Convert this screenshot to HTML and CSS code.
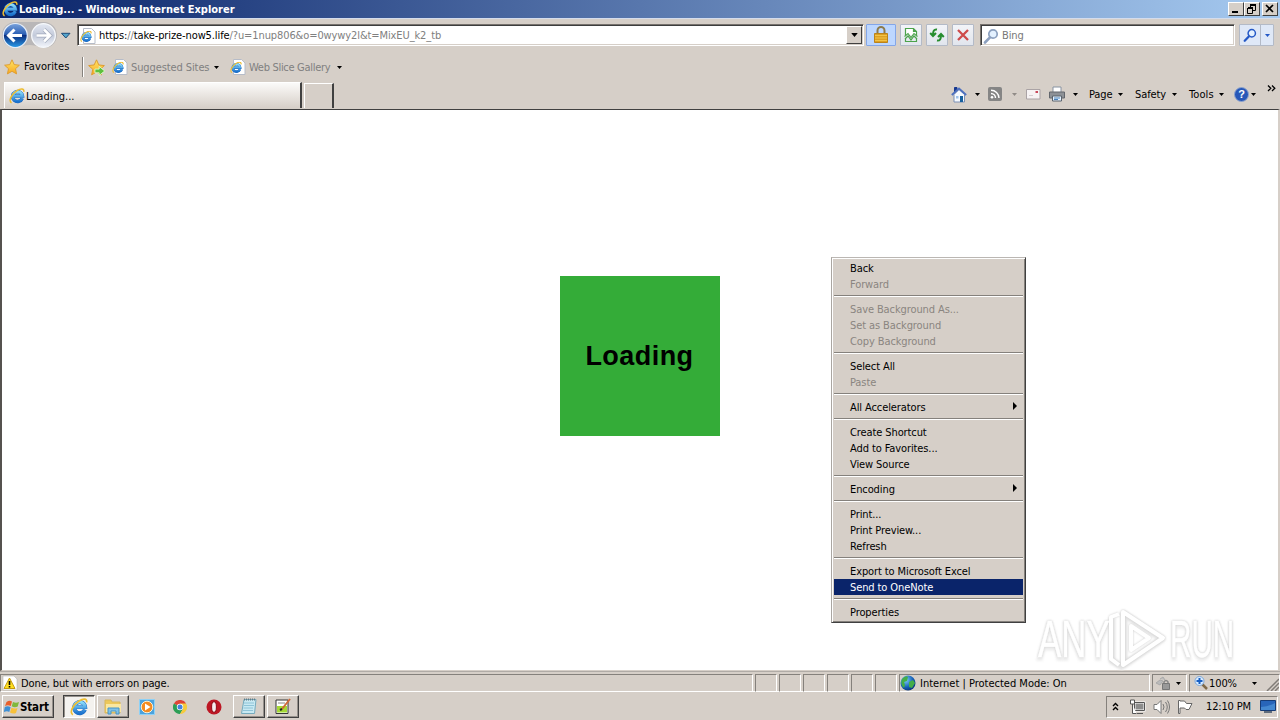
FILE: index.html
```
<!DOCTYPE html>
<html lang="en">
<head>
<meta charset="utf-8">
<title>Loading... - Windows Internet Explorer</title>
<link rel="stylesheet" href="styles.css">
</head>
<body>
<svg class="defs" width="0" height="0">
<defs>
<linearGradient id="blue" x1="0" y1="0" x2="0" y2="1"><stop offset="0" stop-color="#8bdcfa"/><stop offset="1" stop-color="#1c74cf"/></linearGradient>
<linearGradient id="nav" x1="0" y1="0" x2="0" y2="1"><stop offset="0" stop-color="#7ba3dc"/><stop offset=".45" stop-color="#2b5fb4"/><stop offset=".5" stop-color="#0c2f80"/><stop offset="1" stop-color="#2a9be8"/></linearGradient>
<linearGradient id="navoff" x1="0" y1="0" x2="0" y2="1"><stop offset="0" stop-color="#e3e8f2"/><stop offset=".5" stop-color="#c3cada"/><stop offset="1" stop-color="#f2f5fb"/></linearGradient>
<linearGradient id="gold" x1="0" y1="0" x2="0" y2="1"><stop offset="0" stop-color="#ffe668"/><stop offset="1" stop-color="#f8a820"/></linearGradient>
<radialGradient id="earth" cx=".35" cy=".3" r=".8"><stop offset="0" stop-color="#7fd0f8"/><stop offset=".6" stop-color="#1660b8"/><stop offset="1" stop-color="#0a2c6c"/></radialGradient>
</defs>
<symbol id="ie" viewBox="0 0 16 16">
<path d="M13.200 10.300A4.900 4.900 0 1 1 13.500 8.100H5" fill="none" stroke="#1a66bd" stroke-width="3.500"/>
<path d="M13.200 10.300A4.900 4.900 0 1 1 13.500 8.100H5" fill="none" stroke="url(#blue)" stroke-width="2.700"/>
<path d="M2.600 14.800C-1 13.200 2.500 6 8 2.600c3.600-2.200 7.400-2.400 6.800 1.200" fill="none" stroke="#edbd32" stroke-width="1.500"/>
</symbol>
<symbol id="iepage" viewBox="0 0 16 16">
<path d="M3.500.5h8l3.500 3.500v11.500h-11.500z" fill="#fff" stroke="#b6bcc8"/>
<svg x="0" y="2.500" width="12" height="12"><use href="#ie"/></svg>
</symbol>
<symbol id="star" viewBox="0 0 16 16"><path d="M8 .8l2.200 4.800 5.200.6-3.900 3.500 1.100 5.200L8 12.300l-4.600 2.600 1.100-5.200L.6 6.200l5.200-.6z" fill="url(#gold)" stroke="#dc9a2c" stroke-width=".9"/></symbol>
<symbol id="down" viewBox="0 0 5 3"><path d="M0 0h5L2.500 3z" fill="currentColor"/></symbol>
<symbol id="magnifier" viewBox="0 0 16 16"><path d="M7.200 9.200L2 14.500" stroke="currentColor" stroke-width="2.600" stroke-linecap="round"/><circle cx="10" cy="6" r="4.200" fill="#e4f1ff" stroke="currentColor" stroke-width="1.700"/></symbol>
</svg>

<header class="titlebar">
<svg class="i16" viewBox="0 0 16 16"><use href="#ie"/></svg>
<span class="title">Loading... - Windows Internet Explorer</span>
<div class="winbtns">
<span class="winbtn"><svg width="14" height="12"><path d="M3 9h6" stroke="#000" stroke-width="2"/></svg></span>
<span class="winbtn"><svg width="14" height="12" fill="none" stroke="#000"><path d="M5 1.500h6M5.500 2v2M10.500 1v6.500H8M3 4.500h5M2.500 5v5.500h5V4M5 2.500h6M2 5.500h6"/></svg></span>
<span class="winbtn close"><svg width="14" height="12"><path d="M3 2l7 7M10 2L3 9" stroke="#000" stroke-width="1.700"/></svg></span>
</div>
</header>

<nav class="navrow">
<svg class="travel" width="74" height="30" viewBox="0 0 74 30">
<path d="M15 2h29a13 13 0 0 1 0 26q-9-3-14.500-3T15 28A13 13 0 0 1 15 2z" fill="#b9b7b8"/>
<circle cx="15.300" cy="15.500" r="12" fill="url(#nav)" stroke="#e6edf7" stroke-width="1.200"/>
<path d="M14.500 9.500l-6 6 6 6M9 15.500h13" fill="none" stroke="#fff" stroke-width="3"/>
<circle cx="43.500" cy="15.500" r="11.800" fill="url(#navoff)" stroke="#f7f9fc" stroke-width="1.300"/>
<path d="M44 9.500l6 6-6 6M49.500 15.500h-13" fill="none" stroke="#a2aabc" stroke-width="4"/>
<path d="M44 9.500l6 6-6 6M49.500 15.500h-13" fill="none" stroke="#fff" stroke-width="2.600"/>
<path d="M61.500 13.300h8.500l-4.200 4.700z" fill="#54a5cc" stroke="#1f4c78"/>
</svg>
<div class="field address">
<svg class="i16" viewBox="0 0 16 16"><use href="#iepage"/></svg>
<span class="url">https:<i>//</i>take-prize-now5.life<i>/?u=1nup806&amp;o=0wywy2l&amp;t=MixEU_k2_tb</i></span>
<span class="drop"><svg width="7" height="4" viewBox="0 0 5 3"><use href="#down"/></svg></span>
</div>
<span class="btn lock"><svg width="16" height="18" viewBox="0 0 16 18"><path d="M4.500 8V4.500a3.500 3.500 0 0 1 7 0V8" fill="none" stroke="#8d7b4d" stroke-width="2"/><path d="M1.500 7.500h13v9h-13z" fill="#dda022" stroke="#bb831a"/><path d="M2 9.500h12M2 12h12M2 14.500h12" stroke="#f2c448"/></svg></span>
<span class="btn"><svg width="16" height="16" viewBox="0 0 16 16" fill="none" stroke="#4ba34b" stroke-width="1.200"><path d="M2.500 8V1.500h8l3 3V8M10.500 1.500v3h3" fill="#fff"/><path d="M1.500 9.500l3.500-3 3 4 3-4 3.500 3M2.500 11v3.500h11V11M2 12l3-3 3 4 3-4 3 3"/></svg></span>
<span class="btn"><svg width="16" height="16" viewBox="0 0 16 16" fill="none" stroke="#278d2f" stroke-width="2"><path d="M8 2.500C5 2 4 4 4 8M1.200 6L4 9l3-3M8 13.500c3 .5 4-1.500 4-5.500M9 10l3-3 2.800 3"/></svg></span>
<span class="btn"><svg width="16" height="16" viewBox="0 0 16 16"><path d="M3 3l10 10M13 3L3 13" stroke="#ce4b4b" stroke-width="2.300"/></svg></span>
<div class="field search"><svg class="i16 pale" viewBox="0 0 16 16"><use href="#magnifier"/></svg><span>Bing</span></div>
<span class="btn go"><svg class="i14" viewBox="0 0 16 16"><use href="#magnifier"/></svg><span class="godrop"><svg width="5" height="3"><use href="#down"/></svg></span></span>
</nav>

<div class="favrow">
<svg class="i16" viewBox="0 0 16 16"><use href="#star"/></svg><span class="favtext">Favorites</span>
<span class="vline"></span>
<svg class="i17" viewBox="0 0 16 16"><use href="#star"/><path d="M6.500 9.500h4V7l5.200 4.300-5.200 4.200V13h-4z" fill="#5dc03d" stroke="#e5ffd6" stroke-width=".8"/></svg>
<svg class="i16 fi1" viewBox="0 0 16 16"><use href="#iepage"/></svg><span class="dim sites">Suggested Sites</span><svg class="arr" viewBox="0 0 5 3"><use href="#down"/></svg>
<svg class="i16 fi2" viewBox="0 0 16 16"><use href="#iepage"/></svg><span class="dim slices">Web Slice Gallery</span><svg class="arr" viewBox="0 0 5 3"><use href="#down"/></svg>
</div>

<div class="tabrow">
<div class="tab"><svg class="i16" viewBox="0 0 16 16"><use href="#ie"/></svg><span>Loading...</span></div>
<div class="newtab"></div>
<div class="commands">
<svg width="16" height="17" viewBox="0 0 16 17"><path d="M3 8.500V16h10.500V8.500L8 3.500z" fill="#f6faff" stroke="#7b8fb4"/><path d="M3.500 6V1.500H6V4" fill="#17388f" stroke="#17388f"/><path d="M.8 9L8 2.500 15.200 9" fill="none" stroke="#4d70bf" stroke-width="1.800"/><path d="M9 10h3v6H9z" fill="#17609f"/><path d="M5 10h2.500v2.500H5z" fill="#9fc3ea"/></svg>
<svg class="arr c1" viewBox="0 0 5 3"><use href="#down"/></svg>
<svg class="c2" width="14" height="14" viewBox="0 0 14 14"><rect width="14" height="14" rx="2" fill="#858585"/><circle cx="4" cy="10.300" r="1.300" fill="#fff"/><path d="M3 6.500A4.500 4.500 0 0 1 7.500 11M3 3.300A8 8 0 0 1 11 11" fill="none" stroke="#fff" stroke-width="1.400"/></svg>
<svg class="arr c3" viewBox="0 0 5 3"><use href="#down"/></svg>
<svg class="c4" width="15" height="11" viewBox="0 0 15 11"><path d="M.5.5h13.500v9.500H.5z" fill="#f7f3f4" stroke="#aaa3a5"/><path d="M9.500 3h2.500" stroke="#c9485a" stroke-width="2"/><path d="M3 6.500h4" stroke="#d4cdd0"/></svg>
<svg class="c5" width="16" height="16" viewBox="0 0 16 16"><path d="M4 6V1h8v5" fill="#fff" stroke="#8792a1"/><path d="M.5 6h15v6H.5z" fill="#8d9196" stroke="#62666c"/><path d="M3.500 10h9v5h-9z" fill="#e5f2ff" stroke="#59636d"/><path d="M5 12h6M5 13.500h4" stroke="#4c83b9"/></svg>
<svg class="arr c6" viewBox="0 0 5 3"><use href="#down"/></svg>
<span class="w page">Page</span><svg class="arr" viewBox="0 0 5 3"><use href="#down"/></svg>
<span class="w safety">Safety</span><svg class="arr" viewBox="0 0 5 3"><use href="#down"/></svg>
<span class="w tools">Tools</span><svg class="arr" viewBox="0 0 5 3"><use href="#down"/></svg>
<span class="help">?</span><svg class="arr c8" viewBox="0 0 5 3"><use href="#down"/></svg>
<svg class="more" width="9" height="7" fill="none" stroke="#000" stroke-width="1.300"><path d="M1 .5l2.800 2.800L1 6M5 .5l2.800 2.800L5 6"/></svg>
</div>
</div>

<main class="viewport"><div class="loader"><span>Loading</span></div></main>

<svg class="watermark" width="240" height="64" viewBox="0 0 240 64">
<g class="mark-shadow"><text transform="translate(4 52) scale(.67 1)">ANY</text><text transform="translate(136 52) scale(.57 1)">RUN</text><path d="M90 7l38 25-38 26zM78 11v43l12 7"/></g>
<g class="mark"><text transform="translate(4 50) scale(.67 1)">ANY</text><text transform="translate(136 50) scale(.57 1)">RUN</text><path d="M89 5l40 26-40 27zM77 14V10l8-3M77 10v42l8 6M97 19v24l18-12z"/></g>
</svg>

<div class="statusbar">
<div class="pane main"><svg class="i16" viewBox="0 0 16 16"><path d="M1 1h11l3 3v11H1z" fill="#fff" stroke="#aaa" stroke-width=".5"/><path d="M7.500 3l5.500 10.500H2z" fill="#ffdf20" stroke="#c49a10"/><path d="M7.500 6v4M7.500 11v1.600" stroke="#000" stroke-width="1.600"/></svg><span>Done, but with errors on page.</span></div>
<div class="pane s"></div><div class="pane s"></div><div class="pane s"></div><div class="pane s"></div><div class="pane s"></div><div class="pane s"></div>
<div class="pane zone"><svg class="i16" viewBox="0 0 16 16"><circle cx="8" cy="8" r="7.500" fill="url(#earth)"/><path d="M2 4q4-4 6-2l-1 4-3 1 1 3-1 3Q0 10 2 4zM9 7l4-2 2 3-3 5-3-1z" fill="#45ae48"/></svg><span>Internet | Protected Mode: On</span></div>
<div class="pane prot"><svg width="18" height="15" viewBox="0 0 18 15"><path d="M1 7l4-3 3 1-3 4zM5 3l3-2 2 3" fill="#bbb" stroke="#aaa"/><path d="M9 8V6q2-3 4 0v2" fill="none" stroke="#888" stroke-width="1.500"/><path d="M7.500 7.500h7v6h-7z" fill="#999" stroke="#777"/></svg><svg class="arr" viewBox="0 0 5 3"><use href="#down"/></svg></div>
<div class="pane zoom"><svg width="14" height="14" viewBox="0 0 14 14"><path d="M8 8l5 5" stroke="#806a48" stroke-width="2.500"/><circle cx="5.500" cy="5" r="4.500" fill="#d9ecff" stroke="#7ca6d8"/><path d="M5.500 2v6M2.500 5h6" stroke="#175fc4" stroke-width="2"/></svg><span>100%</span><svg class="arr" viewBox="0 0 5 3"><use href="#down"/></svg><svg class="grip" width="13" height="13" stroke="#807c77" stroke-width="1.500"><path d="M1 13L13 1M5 13l8-8M9 13l4-4"/></svg></div>
</div>

<footer class="taskbar">
<div class="task start"><svg class="i16" viewBox="0 0 16 16"><path d="M2.500 3q3-2 5.500-.5L6.800 7Q4 5.500 1 7z" fill="#e8602c"/><path d="M9 3q3 1.500 6 0l-1.300 4.500q-3 1.500-6-.2z" fill="#80b83b"/><path d="M.8 8q3-1.500 5.800.2L5.300 13Q3 11.500-.2 13z" fill="#3e8fd4"/><path d="M7.500 8.700q3 1.500 6 .2L12 14q-3 1.300-6-.5z" fill="#f8c13a"/></svg><b>Start</b></div>
<div class="task b1 pressed"><svg width="18" height="18" viewBox="0 0 16 16"><use href="#ie"/></svg></div>
<div class="task b2"><svg width="18" height="17" viewBox="0 0 18 17"><path d="M1 2h6l1 2h8v11H1z" fill="#edc85b" stroke="#d9b75c"/><path d="M2 6h15v8H2z" fill="#fae7a1"/><path d="M4 16V10h11v6h-3v-3H7v3z" fill="#7fc1e8" stroke="#4794c6"/></svg></div>
<svg class="q1" width="16" height="16" viewBox="0 0 16 16"><path d="M.5.500h15v15H.5z" fill="#4da3dd" stroke="#8ed1f6"/><circle cx="8" cy="8" r="5.800" fill="#f48b20" stroke="#fff0d0"/><path d="M6 4.500L11.500 8 6 11.500z" fill="#fff"/></svg>
<svg class="q2" width="14" height="14" viewBox="0 0 14 14"><path d="M7 7L.9 3.500A7 7 0 0 1 13.100 3.500z" fill="#df4437"/><path d="M7 7h-.1L.9 3.500A7 7 0 0 0 7 14l3-5z" fill="#2c9e56"/><path d="M7 3.500h6.100A7 7 0 0 1 7 14l3-5z" fill="#f6cb3b"/><circle cx="7" cy="7" r="3.200" fill="#fff"/><circle cx="7" cy="7" r="2.500" fill="#4382de"/></svg>
<svg class="q3" width="16" height="16" viewBox="0 0 16 16"><circle cx="8" cy="8" r="7.500" fill="#bd1724"/><ellipse cx="8" cy="8" rx="2.400" ry="5.300" fill="#f4eeee" stroke="#8e0b16"/></svg>
<div class="task b3"><svg width="18" height="17" viewBox="0 0 18 17"><path d="M4 1.500h12l-1.500 14h-13z" fill="#c8e9f2" stroke="#75aabd"/><path d="M4 5h10M4 7.500h10M3.500 10H13M3 12.500h10" stroke="#8fc4d8"/><path d="M4 1.500h12" stroke="#667c86" stroke-width="2" stroke-dasharray="1 1"/></svg></div>
<div class="task b4"><svg width="18" height="17" viewBox="0 0 18 17"><path d="M2 2h12v13.500H2z" fill="#fff" stroke="#333"/><path d="M3 8h10v6.500H3z" fill="#a5d934"/><path d="M4 5h7" stroke="#888"/><path d="M16 1L8 11" stroke="#cf6939" stroke-width="2"/><path d="M8 11l-2 1" stroke="#222" stroke-width="2"/></svg></div>
<div class="tray">
<svg class="t1" width="7" height="9" fill="none" stroke="#000" stroke-width="1.400"><path d="M1 4l2.500-2.500L6 4M1 8l2.500-2.500L6 8"/></svg>
<svg class="t2" width="17" height="16" viewBox="0 0 17 16"><path d="M5.500 3.500h10v8h-10z" fill="#8d8d8d" stroke="#fff" stroke-width="2"/><path d="M5.500 3.500h10v8h-10zM8 14.500h6" fill="none" stroke="#555"/><path d="M1.500 1v4h4V1zM3.500 5v9.500h4" fill="#fff" stroke="#555"/></svg>
<svg class="t3" width="17" height="16" viewBox="0 0 17 16" fill="none" stroke="#777"><path d="M1 5.500h3l4-4v13l-4-4H1z" fill="#fff"/><path d="M10 5q2 3 0 6M12.500 3q3.500 5 0 10M14.500 1.500q4 6.500 0 13"/></svg>
<svg class="t4" width="17" height="16" viewBox="0 0 17 16" fill="#fff" stroke="#666"><path d="M1.500 1.500v13H3V9h4.500l1.500 1.500h3l3-6H9.500L7.500 2H3v-.5z"/></svg>
<span class="clock">12:10 PM</span>
<svg class="t5" width="16" height="13" viewBox="0 0 16 13"><path d="M.5.5h15v10H.5z" fill="#2865b9" stroke="#163c76"/><path d="M1 7Q8 7 15 3v7H1z" fill="#4488d0"/><path d="M4 12h8" stroke="#606c7c" stroke-width="2"/></svg>
</div>
</footer>

<div class="menu">
<div class="item">Back</div><div class="item off">Forward</div><hr>
<div class="item off">Save Background As...</div><div class="item off">Set as Background</div><div class="item off">Copy Background</div><hr>
<div class="item">Select All</div><div class="item off">Paste</div><hr>
<div class="item sub">All Accelerators</div><hr>
<div class="item">Create Shortcut</div><div class="item">Add to Favorites...</div><div class="item">View Source</div><hr>
<div class="item sub">Encoding</div><hr>
<div class="item">Print...</div><div class="item">Print Preview...</div><div class="item">Refresh</div><hr>
<div class="item">Export to Microsoft Excel</div><div class="item active">Send to OneNote</div><hr>
<div class="item">Properties</div>
</div>
</body>
</html>
```
FILE: styles.css
```
* { box-sizing: border-box; }
body { margin: 0; width: 1280px; height: 720px; overflow: hidden; display: flex; flex-direction: column; background: #d6cfc8; color: #000; font: 11px/16px "DejaVu Sans Condensed", "DejaVu Sans", sans-serif; font-stretch: condensed; letter-spacing: -0.1px; white-space: nowrap; position: relative; }
svg { display: block; flex: none; }
span { flex: none; }
.defs { position: absolute; }
.i16 { width: 16px; height: 16px; }
.i17 { width: 17px; height: 17px; }
.i14 { width: 14px; height: 14px; }
.arr { width: 5px; height: 3px; }

.titlebar { height: 18px; flex: none; display: flex; align-items: center; padding-left: 2px; background: linear-gradient(90deg, #0a246a, #a6caf0); color: #fff; }
.title { margin-left: 1px; padding-top: 1px; font-weight: bold; letter-spacing: -0.02px; }
.winbtns { display: flex; margin-left: auto; margin-right: 2px; }
.winbtn { width: 16px; height: 14px; background: #d6cfc8; border: 1px solid; border-color: #fff #404040 #404040 #fff; }
.winbtn.close { margin-left: 2px; }

.navrow { height: 36px; flex: none; display: flex; align-items: flex-start; padding-top: 5px; border-top: 1px solid #d4dcec; }
.travel { margin-top: -4px; }
.field { height: 22px; background: #fff; border: 1px solid; border-color: #77726d #fff #fff #77726d; box-shadow: inset 1px 1px #3d3d3d, inset -1px -1px #d6cfc8; display: flex; align-items: center; }
.address { width: 787px; margin-left: 3px; padding: 1px 1px 0 2px; }
.url { margin-left: 3px; padding-top: 1px; letter-spacing: -0.1px; }
.url i { font-style: normal; color: #808080; }
.drop { width: 16px; height: 18px; margin: -1px 0 0 auto; display: flex; align-items: center; justify-content: center; background: #d6cfc8; border: 1px solid; border-color: #fff #404040 #404040 #fff; }
.btn { width: 22px; height: 22px; margin-left: 4px; display: flex; align-items: center; justify-content: center; border: 1px solid #b3bac7; border-radius: 1px; background: linear-gradient(#f2f4f8, #e1e5ed); }
.lock { width: 30px; margin-left: 2px; background: #bdd7ff; border-color: #83a6e8; }
.search { width: 255px; margin-left: 6px; padding: 2px 2px 1px; color: #777; }
.search span { margin-left: 3px; padding-top: 1px; }
.pale { color: #8ca0bf; }
.go { width: 35px; margin-left: 4px; color: #2458c6; justify-content: flex-start; padding-left: 3px; background: #dfe8f7; }
.godrop { display: flex; align-items: center; justify-content: center; width: 13px; height: 20px; margin-left: 3px; border-left: 1px solid #b3bac7; }

.favrow { height: 26px; flex: none; display: flex; align-items: center; padding-left: 4px; }
.favtext { margin-left: 4px; width: 57px; letter-spacing: 0.1px; }
.vline { width: 2px; height: 20px; background: #85817c; border-right: 1px solid #fff; margin: 0 4px 0 1px; }
.dim { color: #808080; padding-top: 1px; }
.fi1 { margin-left: 7px; }
.sites { margin-left: 3px; width: 83px; }
.fi2 { margin-left: 11px; }
.slices { margin-left: 3px; width: 88px; letter-spacing: -0.3px; }

.tabrow { height: 29px; flex: none; display: flex; padding: 2px 0 0 4px; }
.tab { width: 298px; height: 26px; display: flex; align-items: center; padding-left: 4px; background: linear-gradient(#fbfaf9, #ebe7e3 45%, #d6cfc8); border: 1px solid #fff; border-right: 2px solid #404040; border-bottom: 0; }
.tab span { margin: 3px 0 0 1px; letter-spacing: 0; }
.newtab { width: 30px; height: 25px; margin: 1px 0 0 2px; border: 1px solid #fff; border-right: 2px solid #404040; border-bottom: 0; }
.commands { display: flex; align-items: center; height: 22px; margin: 1px 4px 0 auto; }
.c1 { margin-left: 8px; }
.c2 { margin-left: 8px; }
.c3 { margin-left: 10px; color: #908b87; }
.c4 { margin-left: 9px; }
.c5 { margin-left: 8px; }
.c6 { margin-left: 8px; }
.w { padding-top: 1px; }
.w.page { margin-left: 11px; width: 29px; }
.w.safety { margin-left: 12px; width: 37px; }
.w.tools { margin-left: 12px; width: 30px; letter-spacing: 0.1px; }
.help { width: 15px; height: 15px; margin-left: 10px; border-radius: 50%; background: #2858b8; border: 1px solid #8fa5cf; color: #fff; font: bold 11px/13px "Liberation Sans", sans-serif; text-align: center; letter-spacing: 0; }
.c8 { margin-left: 2px; }
.more { margin: -12px 0 0 11px; }

.viewport { height: 562px; flex: none; background: #fff; border: solid; border-width: 1px 2px 1px 2px; border-color: #404040 #d6cfc8 #d6cfc8 #55524f; display: flex; justify-content: center; align-items: flex-start; padding-top: 166px; }
.loader { width: 160px; height: 160px; background: #34ac38; display: flex; align-items: center; justify-content: center; padding-right: 1px; font: bold 27px/30px "Liberation Sans", Arial, sans-serif; letter-spacing: .45px; }
.watermark { position: absolute; left: 1034px; top: 607px; }
.watermark text { font: 52px "Liberation Sans", sans-serif; letter-spacing: 0; }
.mark { fill: #fff; stroke: #fff; stroke-width: .5; filter: drop-shadow(0 0 1px #ccc); }
.mark path { stroke-width: 4; }
.mark-shadow { fill: #efefef; stroke: #efefef; stroke-width: 4; filter: blur(1px); }
.mark-shadow path { stroke: #e6e6e6; stroke-width: 7; }
.mark path, .mark-shadow path { fill: none; stroke-linejoin: round; }

.statusbar { height: 21px; flex: none; display: flex; gap: 2px; padding: 2px 2px 1px 0; border-top: 1px solid #b0aba6; border-bottom: 1px solid #fff; }
.pane { display: flex; align-items: center; flex: none; border: 1px solid; border-color: #85817c #fff #fff #85817c; height: 18px; }
.pane span { padding-top: 1px; }
.main { width: 753px; padding-left: 1px; }
.main span { margin-left: 3px; }
.s { width: 22px; }
.zone { width: 251px; padding-left: 0; }
.zone span { margin-left: 4px; letter-spacing: 0; }
.prot { width: 35px; padding-left: 2px; gap: 3px; }
.zoom { width: 91px; padding-left: 4px; }
.zoom span { margin-left: 1px; width: 43px; }
.grip { margin-left: auto; align-self: flex-end; }

.taskbar { height: 28px; flex: none; display: flex; align-items: center; padding: 1px 2px 0; }
.task { height: 23px; display: flex; align-items: center; justify-content: center; border: 1px solid; border-color: #fff #404040 #404040 #fff; box-shadow: inset -1px -1px #96918c; }
.start { width: 52px; justify-content: flex-start; padding-left: 1px; letter-spacing: -0.15px; }
.start b { margin-left: 0; font-size: 11.500px; }
.b1 { width: 32px; margin-left: 9px; }
.pressed { background: #f4f2ef; border-color: #404040 #fff #fff #404040; box-shadow: inset 1px 1px #96918c; }
.b2 { width: 32px; margin-left: 2px; }
.q1 { margin-left: 10px; }
.q2 { margin-left: 18px; }
.q3 { margin-left: 19px; }
.b3 { width: 32px; margin-left: 11px; }
.b4 { width: 32px; margin-left: 2px; }
.tray { width: 172px; height: 22px; margin-left: auto; display: flex; align-items: center; border: 1px solid; border-color: #85817c #fff #fff #85817c; padding-left: 5px; }
.t2 { margin-left: 10px; }
.t3 { margin-left: 7px; }
.t4 { margin-left: 7px; }
.clock { margin-left: 12px; width: 46px; padding-top: 1px; letter-spacing: -0.15px; }
.t5 { margin-left: 8px; }

.menu { position: absolute; left: 831px; top: 257px; width: 195px; height: 366px; padding: 2px 1px 1px; background: #d6cfc8; border: 1px solid; border-color: #bbb7b3 #404040 #404040 #aaa6a2; box-shadow: inset 1px 1px #fff, inset -1px -1px #85817c; }
.item { height: 16px; line-height: 18px; padding-left: 16px; margin: 0 1px; position: relative; }
.off { color: #8a8580; }
.active { background: #0a246a; color: #fff; }
.sub::after { content: ""; position: absolute; right: 6px; top: 3px; border: solid transparent; border-width: 4px 0 4px 4px; border-left-color: #000; }
.menu hr { height: 2px; margin: 3px 1px 4px; border: 0; border-top: 1px solid #85817c; background: #fff; }
```
